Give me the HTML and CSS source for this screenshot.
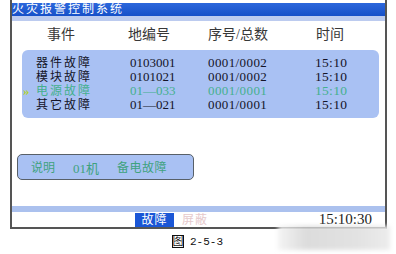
FILE: index.html
```html
<!DOCTYPE html>
<html>
<head>
<meta charset="utf-8">
<link rel="stylesheet" href="styles.css">
</head>
<body>
<div class="page">
  <div class="frame">
    <div class="titlebar">火灾报警控制系统</div>
    <div class="substrip"></div>
    <div class="head">
      <span class="c1">事件</span>
      <span class="c2">地编号</span>
      <span class="c3">序号/总数</span>
      <span class="c4">时间</span>
    </div>
    <div class="panel">
      <div class="row r1"><span class="c1">器件故障</span><span class="c2">0103001</span><span class="c3">0001/0002</span><span class="c4">15:10</span></div>
      <div class="row r2"><span class="c1">模块故障</span><span class="c2">0101021</span><span class="c3">0001/0002</span><span class="c4">15:10</span></div>
      <div class="row r3 sel"><span class="mark">»</span><span class="c1">电源故障</span><span class="c2">01—033</span><span class="c3">0001/0001</span><span class="c4">15:10</span></div>
      <div class="row r4"><span class="c1">其它故障</span><span class="c2">01—021</span><span class="c3">0001/0001</span><span class="c4">15:10</span></div>
    </div>
    <div class="desc">
      <span class="d1">说明</span><span class="d2">01机</span><span class="d3">备电故障</span>
    </div>
    <div class="spacer"></div>
    <div class="botstrip"></div>
    <div class="status">
      <span class="tab active">故障</span>
      <span class="tab dim">屏蔽</span>
      <span class="clock">15:10:30</span>
    </div>
  </div>
  <div class="caption"><span class="fig">图</span><span class="num">2-5-3</span></div>
  <div class="blur"></div>
</div>
</body>
</html>
```
FILE: styles.css
```css
html, body {
  margin: 0;
  padding: 0;
  background: #ffffff;
}
.page {
  position: relative;
  width: 396px;
  height: 254px;
  overflow: hidden;
  font-family: "Liberation Serif", "Noto Sans CJK SC", serif;
}
.frame {
  margin-left: 10px;
  width: 373px;
  height: 227px;
  border-left: 2px solid #555;
  border-right: 2px solid #555;
  border-bottom: 2px solid #555;
  display: flex;
  flex-direction: column;
}
.titlebar {
  margin-top: 3px;
  height: 13px;
  background: linear-gradient(#2c67dc, #1650c8);
  color: #ffffff;
  font-family: "Liberation Serif", "Noto Sans CJK SC", sans-serif;
  font-size: 12px;
  line-height: 13px;
  letter-spacing: 2px;
}
.substrip {
  height: 5px;
  background: #bccbef;
}
.head {
  display: flex;
  height: 14px;
  margin-top: 7px;
  font-family: "Liberation Serif", "Noto Sans CJK SC", sans-serif;
  font-size: 14px;
  line-height: 14px;
  color: #383838;
}
.head .c1 { margin-left: 35px; width: 81px; }
.head .c2 { width: 80px; }
.head .c3 { width: 108px; }
.panel {
  margin: 8px 6px 0 10px;
  height: 68px;
  background: #a9c1f3;
  border-radius: 6px;
  padding-top: 6px;
  box-sizing: border-box;
}
.row {
  display: flex;
  align-items: center;
  height: 14px;
  line-height: 14px;
  color: #141428;
  position: relative;
}
.row .c1 {
  font-family: "Liberation Serif", "Noto Sans CJK SC", serif;
  font-size: 12px;
  letter-spacing: 2px;
  width: 94px;
  margin-left: 14px;
}
.row .c2 { width: 78px; font-size: 13px; }
.row .c3 { width: 107px; font-size: 13px; letter-spacing: 0.4px; }
.row .c4 { font-size: 13.5px; letter-spacing: 0.3px; }
.sel { color: #45b08e; }
.mark {
  position: absolute;
  left: 1px;
  top: 0;
  font-size: 13px;
  font-weight: bold;
  color: #b2d22e;
  line-height: 14px;
}
.desc {
  margin: 36px 0 0 5px;
  width: 177px;
  height: 26px;
  box-sizing: border-box;
  border: 1px solid #586068;
  border-radius: 5px;
  background: #a9c1f3;
  display: flex;
  align-items: center;
  color: #3fa27e;
  font-family: "Liberation Serif", "Noto Sans CJK SC", sans-serif;
  font-size: 12px;
}
.desc .d1 { margin-left: 13px; width: 42px; }
.desc .d2 { width: 44px; font-size: 13px; }
.desc .d3 { letter-spacing: 0.5px; }
.spacer { flex: 1; }
.botstrip {
  height: 6px;
  background: #abc1ee;
}
.status {
  height: 15px;
  display: flex;
  align-items: center;
  font-family: "Liberation Serif", "Noto Sans CJK SC", sans-serif;
  font-size: 12px;
}
.tab {
  height: 14px;
  line-height: 14px;
}
.active {
  margin-left: 123px;
  width: 39px;
  background: #1a56d6;
  color: #ffffff;
  text-align: center;
  letter-spacing: 1px;
}
.dim {
  margin-left: 8px;
  color: #e6c9cc;
  letter-spacing: 1px;
}
.clock {
  margin-left: auto;
  margin-right: 13px;
  font-family: "Liberation Serif", serif;
  font-size: 15px;
  color: #222;
}
.caption {
  margin: 6px 0 0 172px;
  display: flex;
  align-items: center;
  height: 13px;
  color: #111;
}
.fig {
  font-family: "Liberation Sans", "Noto Sans CJK SC", sans-serif;
  border: 1px solid #111;
  font-size: 11px;
  line-height: 11px;
  width: 10px;
  height: 11px;
  display: flex;
  align-items: center;
  justify-content: center;
}
.num {
  margin-left: 6px;
  font-family: "Liberation Mono", monospace;
  font-size: 11px;
  line-height: 12px;
}
.blur {
  position: absolute;
  left: 278px;
  top: 226px;
  width: 112px;
  height: 24px;
  background: linear-gradient(90deg, #f4f4f4, #dcdcdc 25%, #e2e2e2 70%, #ececec);
  filter: blur(2px);
}
```
